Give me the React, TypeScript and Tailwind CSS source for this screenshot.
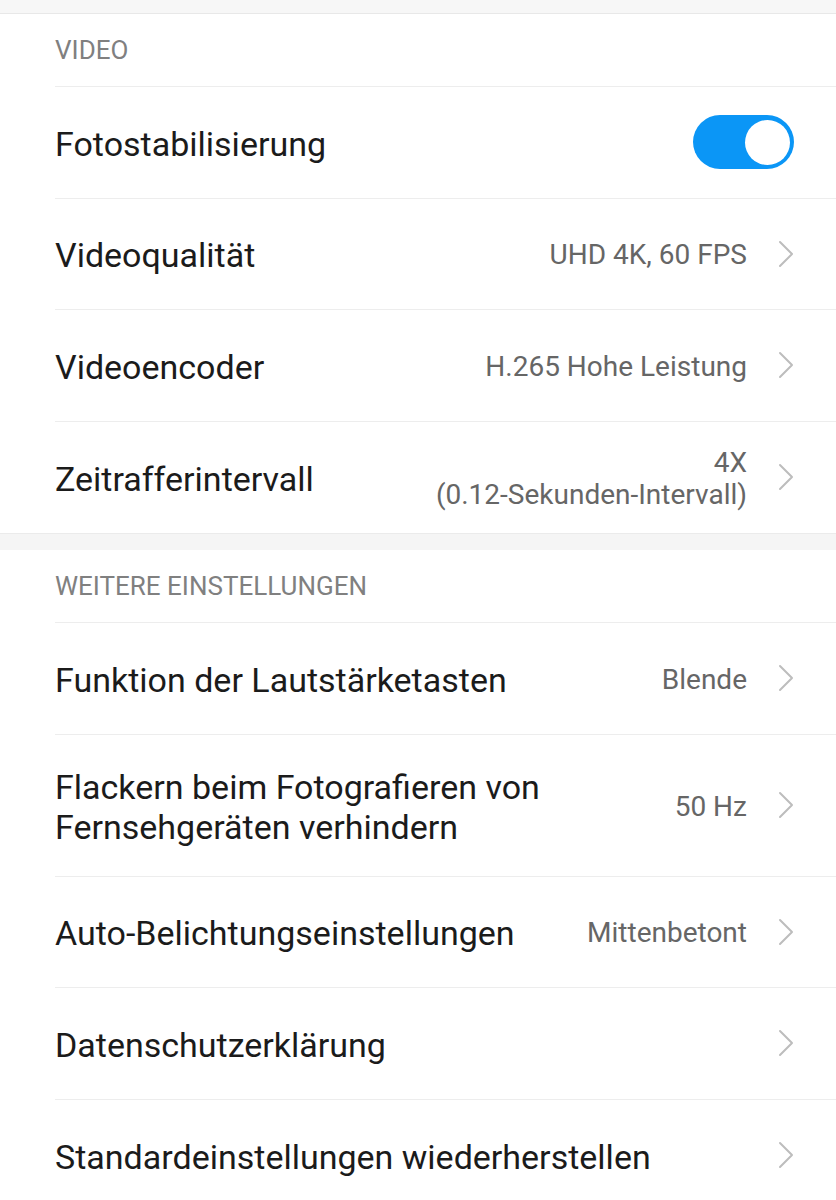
import React from 'react'

type Row = {
  title: string
  value?: string
  value2?: string
  toggle?: boolean
  tall?: boolean
}

const videoRows: Row[] = [
  { title: 'Fotostabilisierung', toggle: true },
  { title: 'Videoqualität', value: 'UHD 4K, 60 FPS' },
  { title: 'Videoencoder', value: 'H.265 Hohe Leistung' },
  { title: 'Zeitrafferintervall', value: '4X', value2: '(0.12-Sekunden-Intervall)' },
]

const moreRows: Row[] = [
  { title: 'Funktion der Lautstärketasten', value: 'Blende' },
  { title: 'Flackern beim Fotografieren von Fernsehgeräten verhindern', value: '50 Hz', tall: true },
  { title: 'Auto-Belichtungseinstellungen', value: 'Mittenbetont' },
  { title: 'Datenschutzerklärung' },
  { title: 'Standardeinstellungen wiederherstellen' },
]

function Chevron() {
  return (
    <svg width="16" height="28" viewBox="0 0 16 28" fill="none" className="shrink-0">
      <path d="M2 2 L14 14 L2 26" stroke="#bdbdbd" strokeWidth="2" strokeLinecap="round" strokeLinejoin="round" />
    </svg>
  )
}

function Toggle() {
  return (
    <div className="w-[101px] h-[54px] rounded-full bg-[#0b96f6] flex items-center justify-end pr-[4px]">
      <div className="w-[45px] h-[45px] rounded-full bg-white" />
    </div>
  )
}

function SettingRow({ row, last }: { row: Row; last?: boolean }) {
  return (
    <div className={`flex items-center pr-[42px] ${row.tall ? 'h-[142px]' : 'h-[111.5px]'} ${last ? '' : 'border-b border-[#ededed]'}`}>
      <div className="flex-1 pt-[3px] text-[34px] leading-[40px] text-[#1b1b1b]">
        {row.title}
      </div>
      {row.toggle ? (
        <div className="pl-2">
          <Toggle />
        </div>
      ) : (
        <div className="flex items-center gap-[31px]">
          {row.value && (
            <div className="pt-[3px] text-right text-[28px] leading-[32px] text-[#666666]">
              <div>{row.value}</div>
              {row.value2 && <div>{row.value2}</div>}
            </div>
          )}
          <Chevron />
        </div>
      )}
    </div>
  )
}

function Section({ label, rows }: { label: string; rows: Row[] }) {
  return (
    <section className="bg-white pl-[55px]">
      <div className="h-[73px] flex items-center border-b border-[#ededed] text-[26px] text-[#808080]">
        {label}
      </div>
      {rows.map((row, i) => (
        <SettingRow key={row.title} row={row} last={i === rows.length - 1} />
      ))}
    </section>
  )
}

export default function App() {
  return (
    <div className="w-[836px] h-[1200px] overflow-hidden bg-white" style={{ fontFamily: 'Roboto, "Noto Sans", sans-serif' }}>
      {/* top gap */}
      <div className="h-[14px] bg-[#f7f7f7] border-b border-[#e8e8e8]" />
      <Section label="VIDEO" rows={videoRows} />
      <div className="h-[17px] bg-[#f5f5f5] border-t border-[#ebebeb]" />
      <Section label="WEITERE EINSTELLUNGEN" rows={moreRows} />
    </div>
  )
}
